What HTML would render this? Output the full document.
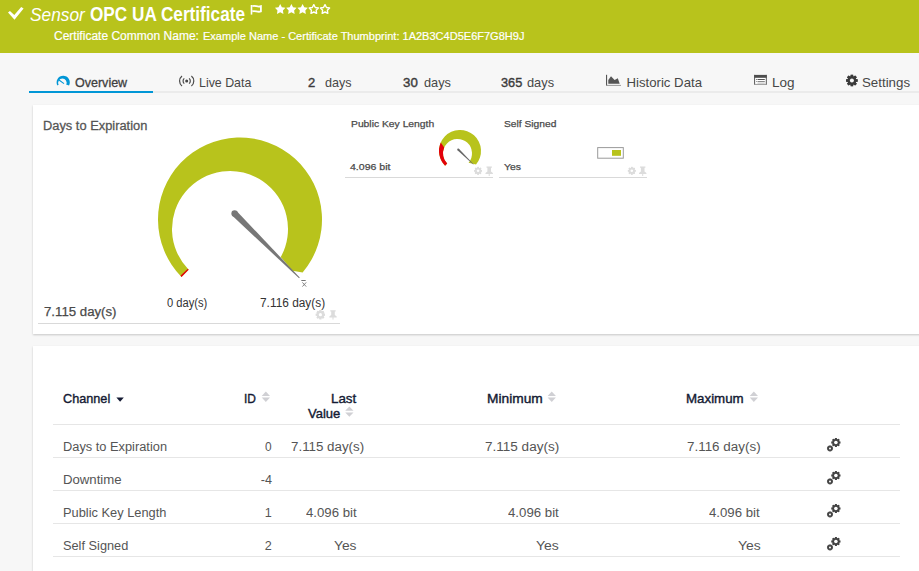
<!DOCTYPE html>
<html><head><meta charset="utf-8"><style>
html,body{margin:0;padding:0;width:919px;height:571px;overflow:hidden;background:#f7f7f7;position:relative;font-family:"Liberation Sans",sans-serif}
.t{position:absolute;white-space:nowrap;transform-origin:0 0}
.card{position:absolute;background:#fff;box-shadow:0 1px 2px rgba(0,0,0,0.2)}
svg{position:absolute;left:0;top:0;overflow:visible}
</style></head><body>
<div style="position:absolute;left:0;top:0;width:919px;height:53px;background:#b8c31c"></div>
<svg width="919" height="53"><polygon points="8.0,12.6 9.96,10.9 14.3,15.1 21.2,7.0 23.6,8.6 14.5,19.8" fill="#fff"/><rect x="250.7" y="5" width="1.6" height="9.6" fill="#fff"/><path d="M252.3,6.2 C255,4.9 257.5,7.5 260.9,6.2 L260.9,11.4 C257.5,12.7 255,10.1 252.3,11.4" fill="none" stroke="#fff" stroke-width="1.8"/><polygon points="280.20,4.00 281.88,7.19 285.43,7.80 282.92,10.38 283.43,13.95 280.20,12.36 276.97,13.95 277.48,10.38 274.97,7.80 278.52,7.19" fill="#fff"/><polygon points="291.40,4.00 293.08,7.19 296.63,7.80 294.12,10.38 294.63,13.95 291.40,12.36 288.17,13.95 288.68,10.38 286.17,7.80 289.72,7.19" fill="#fff"/><polygon points="302.60,4.00 304.28,7.19 307.83,7.80 305.32,10.38 305.83,13.95 302.60,12.36 299.37,13.95 299.88,10.38 297.37,7.80 300.92,7.19" fill="#fff"/><polygon points="313.80,4.70 315.27,7.48 318.37,8.02 316.17,10.27 316.62,13.38 313.80,12.00 310.98,13.38 311.43,10.27 309.23,8.02 312.33,7.48" fill="none" stroke="#fff" stroke-width="1.4" stroke-linejoin="round"/><polygon points="325.00,4.70 326.47,7.48 329.57,8.02 327.37,10.27 327.82,13.38 325.00,12.00 322.18,13.38 322.63,10.27 320.43,8.02 323.53,7.48" fill="none" stroke="#fff" stroke-width="1.4" stroke-linejoin="round"/></svg>
<div class="t" style="left:29.96px;top:6.00px;font-size:18.41px;line-height:18.41px;font-weight:400;color:#fff;font-style:italic;transform:scaleX(0.9397);">Sensor</div>
<div class="t" style="left:89.92px;top:5.00px;font-size:19.57px;line-height:19.57px;font-weight:700;color:#fff;font-style:normal;transform:scaleX(0.8783);">OPC UA Certificate</div>
<div class="t" style="left:54.40px;top:30.00px;font-size:12.61px;line-height:12.61px;font-weight:400;color:#fff;font-style:normal;transform:scaleX(0.9530);-webkit-text-stroke:0.2px #fff;">Certificate Common Name:</div>
<div class="t" style="left:202.73px;top:31.00px;font-size:11.40px;line-height:11.40px;font-weight:400;color:#fff;font-style:normal;transform:scaleX(0.9677);-webkit-text-stroke:0.2px #fff;">Example Name - Certificate Thumbprint: 1A2B3C4D5E6F7G8H9J</div>
<div style="position:absolute;left:29px;top:91px;width:890px;height:2px;background:#ebebeb"></div>
<div style="position:absolute;left:29px;top:91px;width:124px;height:2px;background:#0096d6"></div>
<div class="t" style="left:75.30px;top:76.00px;font-size:13.19px;line-height:13.19px;font-weight:400;color:#404040;font-style:normal;transform:scaleX(0.9491);-webkit-text-stroke:0.3px #404040;">Overview</div>
<div class="t" style="left:198.76px;top:76.00px;font-size:13.19px;line-height:13.19px;font-weight:400;color:#474747;font-style:normal;transform:scaleX(0.9382);">Live Data</div>
<div class="t" style="left:307.80px;top:76.00px;font-size:13.19px;line-height:13.19px;font-weight:400;color:#3c3c3c;font-style:normal;transform:scaleX(0.9857);-webkit-text-stroke:0.4px #3c3c3c;">2</div>
<div class="t" style="left:324.50px;top:76.00px;font-size:13.00px;line-height:13.00px;font-weight:400;color:#474747;font-style:normal;transform:scaleX(0.9667);">days</div>
<div class="t" style="left:403.30px;top:76.00px;font-size:13.19px;line-height:13.19px;font-weight:400;color:#3c3c3c;font-style:normal;transform:scaleX(1.0071);-webkit-text-stroke:0.4px #3c3c3c;">30</div>
<div class="t" style="left:423.50px;top:76.00px;font-size:13.00px;line-height:13.00px;font-weight:400;color:#474747;font-style:normal;transform:scaleX(0.9815);">days</div>
<div class="t" style="left:500.90px;top:76.00px;font-size:13.19px;line-height:13.19px;font-weight:400;color:#3c3c3c;font-style:normal;transform:scaleX(0.9682);-webkit-text-stroke:0.4px #3c3c3c;">365</div>
<div class="t" style="left:527.00px;top:76.00px;font-size:13.00px;line-height:13.00px;font-weight:400;color:#474747;font-style:normal;transform:scaleX(0.9852);">days</div>
<div class="t" style="left:626.50px;top:76.00px;font-size:13.19px;line-height:13.19px;font-weight:400;color:#474747;font-style:normal;">Historic Data</div>
<div class="t" style="left:772.08px;top:76.00px;font-size:13.19px;line-height:13.19px;font-weight:400;color:#474747;font-style:normal;transform:scaleX(1.0250);">Log</div>
<div class="t" style="left:862.19px;top:76.00px;font-size:13.19px;line-height:13.19px;font-weight:400;color:#474747;font-style:normal;transform:scaleX(1.0087);">Settings</div>
<svg width="919" height="100"><path d="M57.37,85.40 A6.6,6.6 0 1 1 69.03,85.40 L66.11,84.57 A4.2,4.2 0 1 0 58.69,84.57 Z" fill="#0096d6"/><line x1="59.0" y1="80.0" x2="64.0" y2="83.6" stroke="#0096d6" stroke-width="1.1"/><circle cx="186.7" cy="81.0" r="1.5" fill="#444"/><path d="M184.3,78.4 A3.4,3.4 0 0 0 184.3,83.6 M189.1,78.4 A3.4,3.4 0 0 1 189.1,83.6" fill="none" stroke="#4a4a4a" stroke-width="1.2"/><path d="M182.0,76.0 A6.4,6.4 0 0 0 182.0,86.0 M191.4,76.0 A6.4,6.4 0 0 1 191.4,86.0" fill="none" stroke="#4a4a4a" stroke-width="1.2"/><rect x="606" y="74.8" width="1.1" height="11.1" fill="#555"/><rect x="606" y="84.9" width="15" height="1" fill="#9a9a9a"/><polygon points="608.3,83.8 608.3,79.9 611,76.3 614.6,80 617.8,78.2 619.7,83.8" fill="#555"/><rect x="754.1" y="74.9" width="12.7" height="10" fill="#fff"/><rect x="754.1" y="74.9" width="12.7" height="2.9" fill="#4d4d4d"/><rect x="754.1" y="74.9" width="1" height="10" fill="#555"/><rect x="765.8" y="74.9" width="1" height="10" fill="#555"/><rect x="754.1" y="83.9" width="12.7" height="1" fill="#999"/><rect x="757.5" y="79" width="7.3" height="1" fill="#555"/><rect x="757.5" y="81" width="7.3" height="1" fill="#888"/><rect x="757.5" y="82.6" width="7.3" height="1" fill="#bbb"/><rect x="756" y="79" width="0.9" height="1" fill="#777"/><rect x="756" y="81" width="0.9" height="1" fill="#999"/><rect x="850.65" y="74.80" width="2.51" height="11.40" fill="#3a3a3a" transform="rotate(0.0 851.9 80.5)"/><rect x="850.65" y="74.80" width="2.51" height="11.40" fill="#3a3a3a" transform="rotate(45.0 851.9 80.5)"/><rect x="850.65" y="74.80" width="2.51" height="11.40" fill="#3a3a3a" transform="rotate(90.0 851.9 80.5)"/><rect x="850.65" y="74.80" width="2.51" height="11.40" fill="#3a3a3a" transform="rotate(135.0 851.9 80.5)"/><rect x="850.65" y="74.80" width="2.51" height="11.40" fill="#3a3a3a" transform="rotate(180.0 851.9 80.5)"/><rect x="850.65" y="74.80" width="2.51" height="11.40" fill="#3a3a3a" transform="rotate(225.0 851.9 80.5)"/><rect x="850.65" y="74.80" width="2.51" height="11.40" fill="#3a3a3a" transform="rotate(270.0 851.9 80.5)"/><rect x="850.65" y="74.80" width="2.51" height="11.40" fill="#3a3a3a" transform="rotate(315.0 851.9 80.5)"/><circle cx="851.9" cy="80.5" r="4.45" fill="#3a3a3a"/><circle cx="851.9" cy="80.5" r="2.0" fill="#f7f7f7"/></svg>
<div class="card" style="left:33px;top:105px;width:900px;height:229px"></div>
<div class="card" style="left:33px;top:346px;width:900px;height:240px"></div>
<svg width="919" height="340"><path d="M181.51,276.97 A82,82 0 1 1 302.63,272.43 L292.5,270.7 L280.73,257.12 A58,58 0 1 0 188.63,269.65 Z" fill="#b8c31c"/><path d="M181.51,276.97 A82,82 0 0 1 180.42,275.84 L187.86,268.85 A58,58 0 0 0 188.63,269.65 Z" fill="#e3000b"/><path d="M232.34,215.77 L299.08,278.22 L299.72,277.58 L236.86,211.23 Z" fill="#777"/><circle cx="234.6" cy="213.5" r="3.2" fill="#777"/><rect x="301.3" y="280" width="4.4" height="0.9" fill="#666"/><path d="M302.4,282.4 L306.2,286.6 M306.2,282.4 L302.4,286.6" stroke="#777" stroke-width="0.9"/><rect x="38" y="323" width="302" height="1" fill="#d9d9d9"/><rect x="319.39" y="310.10" width="2.02" height="9.20" fill="#dcdcdc" transform="rotate(0.0 320.4 314.7)"/><rect x="319.39" y="310.10" width="2.02" height="9.20" fill="#dcdcdc" transform="rotate(45.0 320.4 314.7)"/><rect x="319.39" y="310.10" width="2.02" height="9.20" fill="#dcdcdc" transform="rotate(90.0 320.4 314.7)"/><rect x="319.39" y="310.10" width="2.02" height="9.20" fill="#dcdcdc" transform="rotate(135.0 320.4 314.7)"/><rect x="319.39" y="310.10" width="2.02" height="9.20" fill="#dcdcdc" transform="rotate(180.0 320.4 314.7)"/><rect x="319.39" y="310.10" width="2.02" height="9.20" fill="#dcdcdc" transform="rotate(225.0 320.4 314.7)"/><rect x="319.39" y="310.10" width="2.02" height="9.20" fill="#dcdcdc" transform="rotate(270.0 320.4 314.7)"/><rect x="319.39" y="310.10" width="2.02" height="9.20" fill="#dcdcdc" transform="rotate(315.0 320.4 314.7)"/><circle cx="320.4" cy="314.7" r="3.59" fill="#dcdcdc"/><circle cx="320.4" cy="314.7" r="1.6" fill="#fff"/><path d="M330.3,310.2 h5.4 v1.2 h-0.9 v3.6 l1.9,1.6 v1 h-7.4 v-1 l1.9,-1.6 v-3.6 h-0.9 Z" fill="#dcdcdc"/><rect x="332.5" y="316.2" width="1" height="3.4" fill="#dcdcdc"/><path d="M445.10,165.80 A21,21 0 1 1 476.04,164.55 L468.58,162.76 A14.5,14.5 0 1 0 447.21,163.62 Z" fill="#b8c31c"/><path d="M445.10,165.80 A21,21 0 0 1 440.76,142.59 L444.21,147.59 A14.5,14.5 0 0 0 447.21,163.62 Z" fill="#e3000b"/><path d="M457.50,150.21 L473.22,164.58 L473.58,164.22 L458.90,148.79 Z" fill="#666"/><circle cx="458.2" cy="149.5" r="1.0" fill="#666"/><rect x="345" y="177" width="148" height="1" fill="#d9d9d9"/><rect x="477.24" y="166.90" width="1.72" height="7.80" fill="#dcdcdc" transform="rotate(0.0 478.1 170.8)"/><rect x="477.24" y="166.90" width="1.72" height="7.80" fill="#dcdcdc" transform="rotate(45.0 478.1 170.8)"/><rect x="477.24" y="166.90" width="1.72" height="7.80" fill="#dcdcdc" transform="rotate(90.0 478.1 170.8)"/><rect x="477.24" y="166.90" width="1.72" height="7.80" fill="#dcdcdc" transform="rotate(135.0 478.1 170.8)"/><rect x="477.24" y="166.90" width="1.72" height="7.80" fill="#dcdcdc" transform="rotate(180.0 478.1 170.8)"/><rect x="477.24" y="166.90" width="1.72" height="7.80" fill="#dcdcdc" transform="rotate(225.0 478.1 170.8)"/><rect x="477.24" y="166.90" width="1.72" height="7.80" fill="#dcdcdc" transform="rotate(270.0 478.1 170.8)"/><rect x="477.24" y="166.90" width="1.72" height="7.80" fill="#dcdcdc" transform="rotate(315.0 478.1 170.8)"/><circle cx="478.1" cy="170.8" r="3.04" fill="#dcdcdc"/><circle cx="478.1" cy="170.8" r="1.3" fill="#fff"/><path d="M486.5,166.6 h5.4 v1.2 h-0.9 v3.6 l1.9,1.6 v1 h-7.4 v-1 l1.9,-1.6 v-3.6 h-0.9 Z" fill="#dcdcdc"/><rect x="488.7" y="172.6" width="1" height="3.4" fill="#dcdcdc"/><rect x="597.7" y="147.6" width="25.6" height="10.6" fill="#fff" stroke="#9a9a9a" stroke-width="1"/><rect x="612" y="150" width="9" height="5.8" fill="#b8c31c"/><rect x="499" y="177" width="148" height="1" fill="#d9d9d9"/><rect x="630.94" y="166.90" width="1.72" height="7.80" fill="#dcdcdc" transform="rotate(0.0 631.8 170.8)"/><rect x="630.94" y="166.90" width="1.72" height="7.80" fill="#dcdcdc" transform="rotate(45.0 631.8 170.8)"/><rect x="630.94" y="166.90" width="1.72" height="7.80" fill="#dcdcdc" transform="rotate(90.0 631.8 170.8)"/><rect x="630.94" y="166.90" width="1.72" height="7.80" fill="#dcdcdc" transform="rotate(135.0 631.8 170.8)"/><rect x="630.94" y="166.90" width="1.72" height="7.80" fill="#dcdcdc" transform="rotate(180.0 631.8 170.8)"/><rect x="630.94" y="166.90" width="1.72" height="7.80" fill="#dcdcdc" transform="rotate(225.0 631.8 170.8)"/><rect x="630.94" y="166.90" width="1.72" height="7.80" fill="#dcdcdc" transform="rotate(270.0 631.8 170.8)"/><rect x="630.94" y="166.90" width="1.72" height="7.80" fill="#dcdcdc" transform="rotate(315.0 631.8 170.8)"/><circle cx="631.8" cy="170.8" r="3.04" fill="#dcdcdc"/><circle cx="631.8" cy="170.8" r="1.3" fill="#fff"/><path d="M640,166.6 h5.4 v1.2 h-0.9 v3.6 l1.9,1.6 v1 h-7.4 v-1 l1.9,-1.6 v-3.6 h-0.9 Z" fill="#dcdcdc"/><rect x="642.2" y="172.6" width="1" height="3.4" fill="#dcdcdc"/></svg>
<div class="t" style="left:42.88px;top:120.00px;font-size:12.61px;line-height:12.61px;font-weight:400;color:#555;font-style:normal;transform:scaleX(1.0198);-webkit-text-stroke:0.28px #555;">Days to Expiration</div>
<div class="t" style="left:167.20px;top:297.00px;font-size:12.61px;line-height:12.61px;font-weight:400;color:#333;font-style:normal;transform:scaleX(0.8844);">0 day(s)</div>
<div class="t" style="left:260.36px;top:297.00px;font-size:12.61px;line-height:12.61px;font-weight:400;color:#333;font-style:normal;transform:scaleX(0.9418);">7.116 day(s)</div>
<div class="t" style="left:43.50px;top:306.00px;font-size:12.61px;line-height:12.61px;font-weight:400;color:#4a4a4a;font-style:normal;transform:scaleX(1.0485);-webkit-text-stroke:0.25px #4a4a4a;">7.115 day(s)</div>
<div class="t" style="left:350.50px;top:119.00px;font-size:9.42px;line-height:9.42px;font-weight:400;color:#4a4a4a;font-style:normal;transform:scaleX(1.0973);-webkit-text-stroke:0.25px #4a4a4a;">Public Key Length</div>
<div class="t" style="left:350.40px;top:162.00px;font-size:9.42px;line-height:9.42px;font-weight:400;color:#4a4a4a;font-style:normal;transform:scaleX(1.1222);-webkit-text-stroke:0.25px #4a4a4a;">4.096 bit</div>
<div class="t" style="left:504.00px;top:119.00px;font-size:9.42px;line-height:9.42px;font-weight:400;color:#4a4a4a;font-style:normal;transform:scaleX(1.0896);-webkit-text-stroke:0.25px #4a4a4a;">Self Signed</div>
<div class="t" style="left:504.00px;top:162.00px;font-size:9.42px;line-height:9.42px;font-weight:400;color:#4a4a4a;font-style:normal;transform:scaleX(1.1067);-webkit-text-stroke:0.25px #4a4a4a;">Yes</div>
<svg width="919" height="571"><rect x="53" y="424" width="847" height="1" fill="#e6e6e6"/><rect x="53" y="457" width="847" height="1" fill="#e6e6e6"/><rect x="53" y="490" width="847" height="1" fill="#e6e6e6"/><rect x="53" y="523" width="847" height="1" fill="#e6e6e6"/><rect x="53" y="556" width="847" height="1" fill="#e6e6e6"/><polygon points="116.4,397.6 123.8,397.6 120.1,401.7" fill="#141a33"/><polygon points="261.7,395.90000000000003 270.0,395.90000000000003 265.84999999999997,391.6" fill="#d0d0d4"/><polygon points="261.7,397.6 270.0,397.6 265.84999999999997,401.90000000000003" fill="#d0d0d4"/><polygon points="345.2,410.8 353.5,410.8 349.34999999999997,406.5" fill="#d0d0d4"/><polygon points="345.2,412.5 353.5,412.5 349.34999999999997,416.8" fill="#d0d0d4"/><polygon points="547.6,395.90000000000003 555.9,395.90000000000003 551.75,391.6" fill="#d0d0d4"/><polygon points="547.6,397.6 555.9,397.6 551.75,401.90000000000003" fill="#d0d0d4"/><polygon points="749.7,395.90000000000003 758.0,395.90000000000003 753.85,391.6" fill="#d0d0d4"/><polygon points="749.7,397.6 758.0,397.6 753.85,401.90000000000003" fill="#d0d0d4"/><rect x="834.93" y="438.10" width="1.94" height="8.80" fill="#444" transform="rotate(0.0 835.9 442.5)"/><rect x="834.93" y="438.10" width="1.94" height="8.80" fill="#444" transform="rotate(45.0 835.9 442.5)"/><rect x="834.93" y="438.10" width="1.94" height="8.80" fill="#444" transform="rotate(90.0 835.9 442.5)"/><rect x="834.93" y="438.10" width="1.94" height="8.80" fill="#444" transform="rotate(135.0 835.9 442.5)"/><rect x="834.93" y="438.10" width="1.94" height="8.80" fill="#444" transform="rotate(180.0 835.9 442.5)"/><rect x="834.93" y="438.10" width="1.94" height="8.80" fill="#444" transform="rotate(225.0 835.9 442.5)"/><rect x="834.93" y="438.10" width="1.94" height="8.80" fill="#444" transform="rotate(270.0 835.9 442.5)"/><rect x="834.93" y="438.10" width="1.94" height="8.80" fill="#444" transform="rotate(315.0 835.9 442.5)"/><circle cx="835.9" cy="442.5" r="3.43" fill="#444"/><circle cx="835.9" cy="442.5" r="1.8" fill="#fff"/><rect x="829.34" y="445.40" width="1.32" height="6.00" fill="#444" transform="rotate(0.0 830.0 448.4)"/><rect x="829.34" y="445.40" width="1.32" height="6.00" fill="#444" transform="rotate(51.42857142857143 830.0 448.4)"/><rect x="829.34" y="445.40" width="1.32" height="6.00" fill="#444" transform="rotate(102.85714285714286 830.0 448.4)"/><rect x="829.34" y="445.40" width="1.32" height="6.00" fill="#444" transform="rotate(154.28571428571428 830.0 448.4)"/><rect x="829.34" y="445.40" width="1.32" height="6.00" fill="#444" transform="rotate(205.71428571428572 830.0 448.4)"/><rect x="829.34" y="445.40" width="1.32" height="6.00" fill="#444" transform="rotate(257.14285714285717 830.0 448.4)"/><rect x="829.34" y="445.40" width="1.32" height="6.00" fill="#444" transform="rotate(308.57142857142856 830.0 448.4)"/><circle cx="830.0" cy="448.4" r="2.34" fill="#444"/><circle cx="830.0" cy="448.4" r="1.0" fill="#fff"/><rect x="834.93" y="471.10" width="1.94" height="8.80" fill="#444" transform="rotate(0.0 835.9 475.5)"/><rect x="834.93" y="471.10" width="1.94" height="8.80" fill="#444" transform="rotate(45.0 835.9 475.5)"/><rect x="834.93" y="471.10" width="1.94" height="8.80" fill="#444" transform="rotate(90.0 835.9 475.5)"/><rect x="834.93" y="471.10" width="1.94" height="8.80" fill="#444" transform="rotate(135.0 835.9 475.5)"/><rect x="834.93" y="471.10" width="1.94" height="8.80" fill="#444" transform="rotate(180.0 835.9 475.5)"/><rect x="834.93" y="471.10" width="1.94" height="8.80" fill="#444" transform="rotate(225.0 835.9 475.5)"/><rect x="834.93" y="471.10" width="1.94" height="8.80" fill="#444" transform="rotate(270.0 835.9 475.5)"/><rect x="834.93" y="471.10" width="1.94" height="8.80" fill="#444" transform="rotate(315.0 835.9 475.5)"/><circle cx="835.9" cy="475.5" r="3.43" fill="#444"/><circle cx="835.9" cy="475.5" r="1.8" fill="#fff"/><rect x="829.34" y="478.40" width="1.32" height="6.00" fill="#444" transform="rotate(0.0 830.0 481.4)"/><rect x="829.34" y="478.40" width="1.32" height="6.00" fill="#444" transform="rotate(51.42857142857143 830.0 481.4)"/><rect x="829.34" y="478.40" width="1.32" height="6.00" fill="#444" transform="rotate(102.85714285714286 830.0 481.4)"/><rect x="829.34" y="478.40" width="1.32" height="6.00" fill="#444" transform="rotate(154.28571428571428 830.0 481.4)"/><rect x="829.34" y="478.40" width="1.32" height="6.00" fill="#444" transform="rotate(205.71428571428572 830.0 481.4)"/><rect x="829.34" y="478.40" width="1.32" height="6.00" fill="#444" transform="rotate(257.14285714285717 830.0 481.4)"/><rect x="829.34" y="478.40" width="1.32" height="6.00" fill="#444" transform="rotate(308.57142857142856 830.0 481.4)"/><circle cx="830.0" cy="481.4" r="2.34" fill="#444"/><circle cx="830.0" cy="481.4" r="1.0" fill="#fff"/><rect x="834.93" y="504.10" width="1.94" height="8.80" fill="#444" transform="rotate(0.0 835.9 508.5)"/><rect x="834.93" y="504.10" width="1.94" height="8.80" fill="#444" transform="rotate(45.0 835.9 508.5)"/><rect x="834.93" y="504.10" width="1.94" height="8.80" fill="#444" transform="rotate(90.0 835.9 508.5)"/><rect x="834.93" y="504.10" width="1.94" height="8.80" fill="#444" transform="rotate(135.0 835.9 508.5)"/><rect x="834.93" y="504.10" width="1.94" height="8.80" fill="#444" transform="rotate(180.0 835.9 508.5)"/><rect x="834.93" y="504.10" width="1.94" height="8.80" fill="#444" transform="rotate(225.0 835.9 508.5)"/><rect x="834.93" y="504.10" width="1.94" height="8.80" fill="#444" transform="rotate(270.0 835.9 508.5)"/><rect x="834.93" y="504.10" width="1.94" height="8.80" fill="#444" transform="rotate(315.0 835.9 508.5)"/><circle cx="835.9" cy="508.5" r="3.43" fill="#444"/><circle cx="835.9" cy="508.5" r="1.8" fill="#fff"/><rect x="829.34" y="511.40" width="1.32" height="6.00" fill="#444" transform="rotate(0.0 830.0 514.4)"/><rect x="829.34" y="511.40" width="1.32" height="6.00" fill="#444" transform="rotate(51.42857142857143 830.0 514.4)"/><rect x="829.34" y="511.40" width="1.32" height="6.00" fill="#444" transform="rotate(102.85714285714286 830.0 514.4)"/><rect x="829.34" y="511.40" width="1.32" height="6.00" fill="#444" transform="rotate(154.28571428571428 830.0 514.4)"/><rect x="829.34" y="511.40" width="1.32" height="6.00" fill="#444" transform="rotate(205.71428571428572 830.0 514.4)"/><rect x="829.34" y="511.40" width="1.32" height="6.00" fill="#444" transform="rotate(257.14285714285717 830.0 514.4)"/><rect x="829.34" y="511.40" width="1.32" height="6.00" fill="#444" transform="rotate(308.57142857142856 830.0 514.4)"/><circle cx="830.0" cy="514.4" r="2.34" fill="#444"/><circle cx="830.0" cy="514.4" r="1.0" fill="#fff"/><rect x="834.93" y="537.10" width="1.94" height="8.80" fill="#444" transform="rotate(0.0 835.9 541.5)"/><rect x="834.93" y="537.10" width="1.94" height="8.80" fill="#444" transform="rotate(45.0 835.9 541.5)"/><rect x="834.93" y="537.10" width="1.94" height="8.80" fill="#444" transform="rotate(90.0 835.9 541.5)"/><rect x="834.93" y="537.10" width="1.94" height="8.80" fill="#444" transform="rotate(135.0 835.9 541.5)"/><rect x="834.93" y="537.10" width="1.94" height="8.80" fill="#444" transform="rotate(180.0 835.9 541.5)"/><rect x="834.93" y="537.10" width="1.94" height="8.80" fill="#444" transform="rotate(225.0 835.9 541.5)"/><rect x="834.93" y="537.10" width="1.94" height="8.80" fill="#444" transform="rotate(270.0 835.9 541.5)"/><rect x="834.93" y="537.10" width="1.94" height="8.80" fill="#444" transform="rotate(315.0 835.9 541.5)"/><circle cx="835.9" cy="541.5" r="3.43" fill="#444"/><circle cx="835.9" cy="541.5" r="1.8" fill="#fff"/><rect x="829.34" y="544.40" width="1.32" height="6.00" fill="#444" transform="rotate(0.0 830.0 547.4)"/><rect x="829.34" y="544.40" width="1.32" height="6.00" fill="#444" transform="rotate(51.42857142857143 830.0 547.4)"/><rect x="829.34" y="544.40" width="1.32" height="6.00" fill="#444" transform="rotate(102.85714285714286 830.0 547.4)"/><rect x="829.34" y="544.40" width="1.32" height="6.00" fill="#444" transform="rotate(154.28571428571428 830.0 547.4)"/><rect x="829.34" y="544.40" width="1.32" height="6.00" fill="#444" transform="rotate(205.71428571428572 830.0 547.4)"/><rect x="829.34" y="544.40" width="1.32" height="6.00" fill="#444" transform="rotate(257.14285714285717 830.0 547.4)"/><rect x="829.34" y="544.40" width="1.32" height="6.00" fill="#444" transform="rotate(308.57142857142856 830.0 547.4)"/><circle cx="830.0" cy="547.4" r="2.34" fill="#444"/><circle cx="830.0" cy="547.4" r="1.0" fill="#fff"/></svg>
<div class="t" style="left:63.20px;top:392.00px;font-size:13.04px;line-height:13.04px;font-weight:400;color:#141a33;font-style:normal;transform:scaleX(0.9729);-webkit-text-stroke:0.38px #141a33;">Channel</div>
<div class="t" style="left:244.18px;top:392.00px;font-size:13.04px;line-height:13.04px;font-weight:400;color:#141a33;font-style:normal;transform:scaleX(0.9167);-webkit-text-stroke:0.38px #141a33;">ID</div>
<div class="t" style="left:330.78px;top:392.00px;font-size:13.04px;line-height:13.04px;font-weight:400;color:#141a33;font-style:normal;transform:scaleX(1.0250);-webkit-text-stroke:0.38px #141a33;">Last</div>
<div class="t" style="left:307.70px;top:408.00px;font-size:12.90px;line-height:12.90px;font-weight:400;color:#141a33;font-style:normal;transform:scaleX(1.0094);-webkit-text-stroke:0.38px #141a33;">Value</div>
<div class="t" style="left:486.95px;top:392.00px;font-size:13.04px;line-height:13.04px;font-weight:400;color:#141a33;font-style:normal;transform:scaleX(1.0549);-webkit-text-stroke:0.38px #141a33;">Minimum</div>
<div class="t" style="left:686.38px;top:392.00px;font-size:13.04px;line-height:13.04px;font-weight:400;color:#141a33;font-style:normal;transform:scaleX(1.0218);-webkit-text-stroke:0.38px #141a33;">Maximum</div>
<div class="t" style="left:62.88px;top:441.00px;font-size:12.61px;line-height:12.61px;font-weight:400;color:#555;font-style:normal;transform:scaleX(1.0168);">Days to Expiration</div>
<div class="t" style="left:265.20px;top:441.00px;font-size:12.61px;line-height:12.61px;font-weight:400;color:#555;font-style:normal;transform:scaleX(0.9429);">0</div>
<div class="t" style="left:291.34px;top:441.00px;font-size:12.61px;line-height:12.61px;font-weight:400;color:#555;font-style:normal;transform:scaleX(1.0582);">7.115 day(s)</div>
<div class="t" style="left:485.03px;top:441.00px;font-size:12.61px;line-height:12.61px;font-weight:400;color:#555;font-style:normal;transform:scaleX(1.0731);">7.115 day(s)</div>
<div class="t" style="left:687.34px;top:441.00px;font-size:12.61px;line-height:12.61px;font-weight:400;color:#555;font-style:normal;transform:scaleX(1.0642);">7.116 day(s)</div>
<div class="t" style="left:62.65px;top:474.00px;font-size:12.61px;line-height:12.61px;font-weight:400;color:#555;font-style:normal;transform:scaleX(1.0455);">Downtime</div>
<div class="t" style="left:260.80px;top:474.00px;font-size:12.61px;line-height:12.61px;font-weight:400;color:#555;font-style:normal;">-4</div>
<div class="t" style="left:62.68px;top:507.00px;font-size:12.61px;line-height:12.61px;font-weight:400;color:#555;font-style:normal;transform:scaleX(1.0170);">Public Key Length</div>
<div class="t" style="left:264.80px;top:507.00px;font-size:12.61px;line-height:12.61px;font-weight:400;color:#555;font-style:normal;">1</div>
<div class="t" style="left:305.60px;top:507.00px;font-size:12.61px;line-height:12.61px;font-weight:400;color:#555;font-style:normal;transform:scaleX(1.0479);">4.096 bit</div>
<div class="t" style="left:507.60px;top:507.00px;font-size:12.61px;line-height:12.61px;font-weight:400;color:#555;font-style:normal;transform:scaleX(1.0500);">4.096 bit</div>
<div class="t" style="left:709.40px;top:507.00px;font-size:12.61px;line-height:12.61px;font-weight:400;color:#555;font-style:normal;transform:scaleX(1.0479);">4.096 bit</div>
<div class="t" style="left:62.69px;top:540.00px;font-size:12.61px;line-height:12.61px;font-weight:400;color:#555;font-style:normal;transform:scaleX(1.0127);">Self Signed</div>
<div class="t" style="left:264.80px;top:540.00px;font-size:12.61px;line-height:12.61px;font-weight:400;color:#555;font-style:normal;">2</div>
<div class="t" style="left:334.01px;top:540.00px;font-size:12.61px;line-height:12.61px;font-weight:400;color:#555;font-style:normal;transform:scaleX(1.0947);">Yes</div>
<div class="t" style="left:535.79px;top:540.00px;font-size:12.61px;line-height:12.61px;font-weight:400;color:#555;font-style:normal;transform:scaleX(1.1105);">Yes</div>
<div class="t" style="left:737.59px;top:540.00px;font-size:12.61px;line-height:12.61px;font-weight:400;color:#555;font-style:normal;transform:scaleX(1.1053);">Yes</div>
</body></html>
